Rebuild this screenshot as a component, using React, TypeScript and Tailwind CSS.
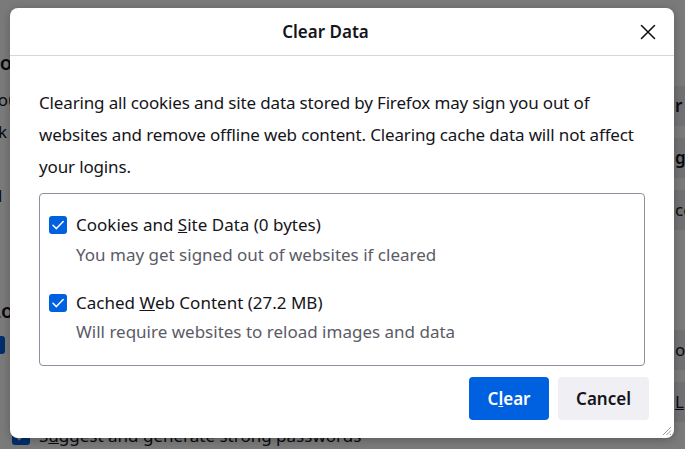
import React from 'react';

const Check = () => (
  <span className="flex h-[18px] w-[18px] shrink-0 items-center justify-center rounded-[3px] bg-[#0061e0]">
    <svg width="14" height="14" viewBox="0 0 14 14" fill="none">
      <path d="M2 7.2 L5.4 10.6 L12.2 3.6" stroke="white" strokeWidth="1.5" strokeLinecap="round" strokeLinejoin="round" />
    </svg>
  </span>
);

const Option = ({ label, hint, first }: { label: React.ReactNode; hint: string; first?: boolean }) => (
  <div className={first ? '' : 'mt-[24px]'}>
    <div className="flex h-[24px] items-center gap-[9px]">
      <Check />
      <span className="text-[#15141a]">{label}</span>
    </div>
    <div className={`pl-[27px] leading-[24px] text-[#5b5b66] ${first ? 'mt-[6px]' : 'mt-[5px]'}`}>{hint}</div>
  </div>
);

export default function App() {
  return (
    <div className="relative h-[449px] w-[685px] overflow-hidden bg-white font-['Segoe_UI','Noto_Sans',sans-serif] text-[17px] text-[#15141a]">
      {/* page behind the dialog, mostly covered */}
      <div className="flex h-full flex-col">
        <div className="flex flex-1 justify-between">
          <div className="w-[10px] overflow-hidden whitespace-nowrap">
            <div className="ml-[-13px] mt-[50px] text-[20px] font-semibold leading-[26px]">Coo</div>
            <div className="ml-[-11px] mt-[12px] leading-[24px]">You</div>
            <div className="ml-[-25px] mt-[8px] leading-[24px]">disk</div>
            <div className="ml-[-2px] mt-[40px] leading-[24px]">l</div>
            <div className="ml-[-10px] mt-[90px] text-[20px] font-semibold leading-[26px]">Log</div>
            <div className="ml-[-13px] mt-[12px] h-[18px] w-[18px] rounded-[3px] bg-[#0061e0]" />
          </div>
          <div className="w-[11px] overflow-hidden whitespace-nowrap font-semibold">
            <div className="mt-[86px] flex h-[40px] items-center bg-[#ececf0] pl-[1px]">r</div>
            <div className="mt-[12px] flex h-[40px] items-center bg-[#ececf0] pl-[1px]">ge</div>
            <div className="mt-[12px] flex h-[40px] items-center bg-[#ececf0] pl-[1px] font-normal">ce</div>
            <div className="mt-[100px] flex h-[40px] items-center bg-[#ececf0] pl-[1px] font-normal">ot</div>
            <div className="mt-[12px] flex h-[40px] items-center bg-[#ececf0] pl-[1px] font-normal underline">L</div>
          </div>
        </div>
        <div className="flex h-[28px] items-center gap-[9px] pl-[12px]">
          <Check />
          <span>
            S<span className="underline">u</span>ggest and generate strong passwords
          </span>
        </div>
      </div>

      {/* backdrop */}
      <div className="absolute inset-0 bg-black/[0.52]" />

      {/* dialog */}
      <div className="absolute left-[10px] top-[8px] flex h-[430px] w-[664px] flex-col rounded-[8px] bg-white shadow-[0_2px_8px_rgba(0,0,0,0.25)]">
        <div className="flex h-[48px] shrink-0 items-center border-b border-[#d7d7db]">
          <div className="flex-1 pl-[6px] text-center font-semibold">Clear Data</div>
          <button className="mr-[13px] flex h-[26px] w-[26px] items-center justify-center">
            <svg width="16" height="16" viewBox="0 0 16 16">
              <path d="M1.5 1.5 L14.5 14.5 M14.5 1.5 L1.5 14.5" stroke="#15141a" strokeWidth="1.6" strokeLinecap="round" />
            </svg>
          </button>
        </div>

        <div className="px-[29px] pt-[31px]">
          <p className="leading-[32px] tracking-[-0.15px]">
            Clearing all cookies and site data stored by Firefox may sign you out of websites and remove offline web
            content. Clearing cache data will not affect your logins.
          </p>
          <div className="mt-[10px] h-[173px] rounded-[4px] border border-[#8f8f9d] pl-[9px] pt-[19px]">
            <Option
              first
              label={
                <>
                  Cookies and <span className="underline">S</span>ite Data (0 bytes)
                </>
              }
              hint="You may get signed out of websites if cleared"
            />
            <Option
              label={
                <>
                  Cached <span className="underline">W</span>eb Content (27.2 MB)
                </>
              }
              hint="Will require websites to reload images and data"
            />
          </div>
        </div>

        <div className="mt-[11px] flex justify-end gap-[9px] pr-[25px]">
          <button className="h-[43px] w-[80px] rounded-[4px] bg-[#0061e0] font-semibold text-white">
            C<span className="underline">l</span>ear
          </button>
          <button className="h-[43px] w-[91px] rounded-[4px] bg-[#f0f0f4] font-semibold text-[#15141a]">Cancel</button>
        </div>

        <svg className="absolute bottom-[2px] right-[2px]" width="12" height="12" viewBox="0 0 12 12">
          <path d="M11 3 L3 11 M11 6.5 L6.5 11 M11 10 L10 11" stroke="#9a9aa2" strokeWidth="1" />
        </svg>
      </div>
    </div>
  );
}
